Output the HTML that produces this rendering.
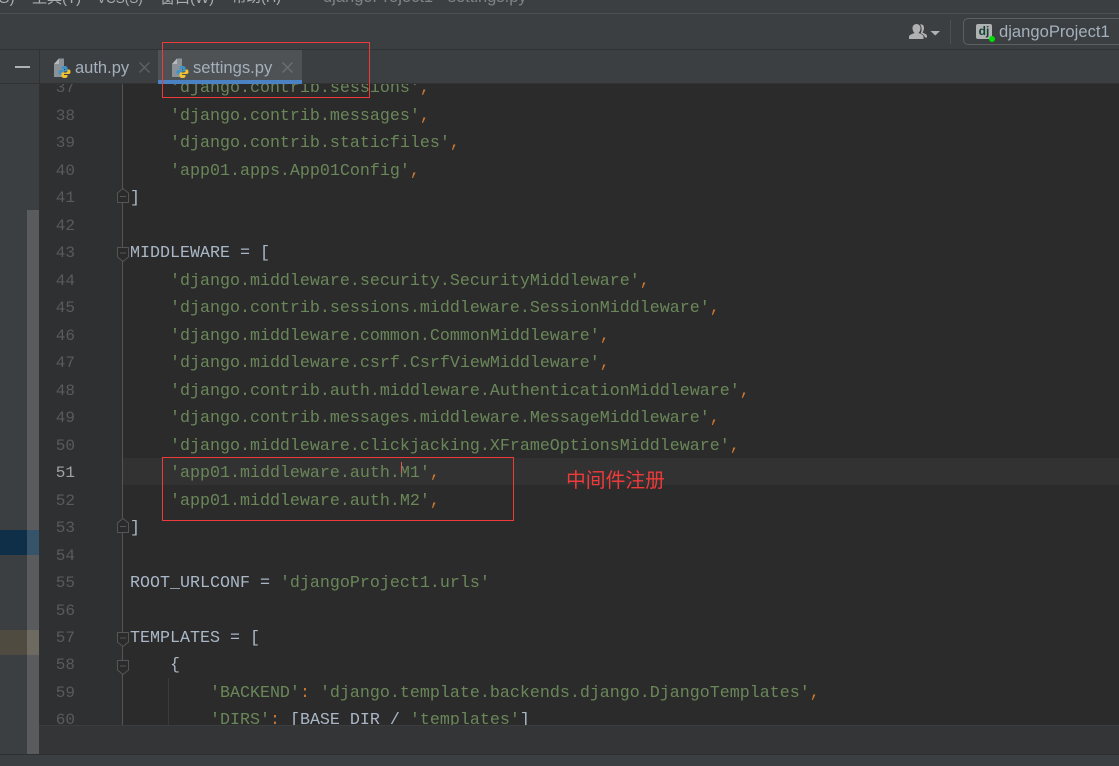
<!DOCTYPE html>
<html>
<head>
<meta charset="utf-8">
<style>
html,body{margin:0;padding:0;width:1119px;height:766px;overflow:hidden;background:#3c3f41}
*{box-sizing:border-box}
.a{position:absolute}
#root{position:relative;width:1119px;height:766px;overflow:hidden;font-family:"Liberation Sans","Noto Sans CJK SC",sans-serif}
.l{position:absolute;left:130px;margin-top:1px;height:28px;line-height:28px;font-family:"Liberation Mono",monospace;font-size:16.67px;color:#a9b7c6;white-space:pre}
.n{position:absolute;left:40px;width:35px;text-align:right;height:28px;line-height:28px;font-family:"Liberation Mono",monospace;font-size:16px;color:#585b5d}
.s{color:#6a8759}.c{color:#cc7832}
.fold{position:absolute;left:117px;width:12px;height:15px}
</style>
</head>
<body>
<div id="root">
<!-- top -->
<div class="a" style="left:0;top:0;width:1119px;height:13px;background:#3c3f41;overflow:hidden;color:#a9adb0;font-size:15px;line-height:15px;white-space:pre">
<span class="a" style="left:-7px;top:-9px">(G)</span>
<span class="a" style="left:32px;top:-9px">工具(T)</span>
<span class="a" style="left:97px;top:-9px;font-size:13.5px">VCS(S)</span>
<span class="a" style="left:160px;top:-9px">窗口(W)</span>
<span class="a" style="left:232px;top:-9px;font-size:14.5px">帮助(H)</span>
<span class="a" style="left:323px;top:-11px;font-size:16.5px;line-height:16px;color:#808486">djangoProject1 - settings.py</span>
</div>
<div class="a" style="left:0;top:13px;width:1119px;height:1px;background:#4d5052"></div>
<div class="a" style="left:0;top:49px;width:1119px;height:1px;background:#323232"></div>
<!-- user icon -->
<svg class="a" style="left:908px;top:23px" width="34" height="18" viewBox="0 0 34 18">
<path d="M1 16 V13.500 C1 12 4 11 6.500 10 C5 8.500 4.500 7 4.500 5 C4.500 2.500 6.500 1 8.500 1 C10.500 1 12.500 2.500 12.500 5 C12.500 7 12 8.500 10.500 10 C13 11 15.500 12 15.500 13.500 V16 Z" fill="#afb1b3"/>
<path d="M12 1.500 C14.500 .8 16 2.500 16 5 C16 7 15.300 8.500 14.500 9.500 C16 10.500 19 11 19 13 V14.500 H17 C16.500 12 14 11 12.500 10.200 C14 8.500 14.200 4 12 1.500 Z" fill="#afb1b3"/>
<path d="M22.500 8 L32 8 L27.250 12.500 Z" fill="#afb1b3"/>
</svg>
<div class="a" style="left:950px;top:20px;width:1px;height:24px;background:#4d5052"></div>
<div class="a" style="left:963px;top:18px;width:170px;height:27px;border:1px solid #5e6060;border-radius:5px;background:#3c3f41"></div>
<div class="a" style="left:976px;top:24px;width:16px;height:15px;background:#afb1b3;border-radius:2px;color:#14402f;font:bold 12px/14px 'Liberation Sans',sans-serif;text-align:center">dj</div>
<div class="a" style="left:989px;top:36px;width:6px;height:6px;background:#00e000;border-radius:50%"></div>
<div class="a" style="left:999px;top:22px;font-size:16.6px;line-height:20px;color:#a4b0bd;white-space:pre">djangoProject1</div>

<!-- tab bar -->
<div class="a" style="left:39px;top:50px;width:1px;height:33px;background:#323232"></div>
<div class="a" style="left:15px;top:66px;width:15px;height:2px;background:#afb1b3"></div>
<div class="a" style="left:158px;top:50px;width:144px;height:30px;background:#4e5254"></div>
<div class="a" style="left:158px;top:80px;width:144px;height:4px;background:#4a82c4"></div>
<div class="a" style="left:0;top:83px;width:158px;height:1px;background:#323232"></div>
<div class="a" style="left:302px;top:83px;width:817px;height:1px;background:#323232"></div>

<svg class="a" style="left:53px;top:57px" width="20" height="22" viewBox="0 0 20 22">
<path d="M1 7 L6 1.500 H11 V20 H1 Z" fill="#8a9297"/>
<path d="M1 7 L6 1.500 V7 Z" fill="#b4babd"/>
<g transform="translate(5.500,9)">
<path d="M6 0 C3.500 0 3 1 3 2 V3 H6.500 V4 H1.500 C.5 4 0 5 0 6 C0 7.500 .5 8.500 1.500 8.500 H3 V7 C3 6 4 5.500 5 5.500 H8 C8.500 5.500 9 5 9 4.500 V2 C9 1 8 0 6 0 Z" fill="#3d93c9"/>
<path transform="rotate(180 6 6)" d="M6 0 C3.500 0 3 1 3 2 V3 H6.500 V4 H1.500 C.5 4 0 5 0 6 C0 7.500 .5 8.500 1.500 8.500 H3 V7 C3 6 4 5.500 5 5.500 H8 C8.500 5.500 9 5 9 4.500 V2 C9 1 8 0 6 0 Z" fill="#f2c12e"/>
</g>
</svg>
<div class="a" style="left:75px;top:57px;font-size:16.5px;line-height:22px;color:#a4b0bd">auth.py</div>
<svg class="a" style="left:139px;top:62px" width="11" height="11" viewBox="0 0 11 11"><path d="M.5 .5 L10.500 10.500 M10.500 .5 L.5 10.500" stroke="#5e6264" stroke-width="1.300"/></svg>

<svg class="a" style="left:171px;top:57px" width="20" height="22" viewBox="0 0 20 22">
<path d="M1 7 L6 1.500 H11 V20 H1 Z" fill="#8a9297"/>
<path d="M1 7 L6 1.500 V7 Z" fill="#b4babd"/>
<g transform="translate(5.500,9)">
<path d="M6 0 C3.500 0 3 1 3 2 V3 H6.500 V4 H1.500 C.5 4 0 5 0 6 C0 7.500 .5 8.500 1.500 8.500 H3 V7 C3 6 4 5.500 5 5.500 H8 C8.500 5.500 9 5 9 4.500 V2 C9 1 8 0 6 0 Z" fill="#3d93c9"/>
<path transform="rotate(180 6 6)" d="M6 0 C3.500 0 3 1 3 2 V3 H6.500 V4 H1.500 C.5 4 0 5 0 6 C0 7.500 .5 8.500 1.500 8.500 H3 V7 C3 6 4 5.500 5 5.500 H8 C8.500 5.500 9 5 9 4.500 V2 C9 1 8 0 6 0 Z" fill="#f2c12e"/>
</g>
</svg>
<div class="a" style="left:193px;top:57px;font-size:16.6px;line-height:22px;color:#a4b0bd">settings.py</div>
<svg class="a" style="left:282px;top:62px" width="11" height="11" viewBox="0 0 11 11"><path d="M.5 .5 L10.500 10.500 M10.500 .5 L.5 10.500" stroke="#6b6f71" stroke-width="1.300"/></svg>

<!-- editor -->
<div class="a" style="left:39px;top:84px;width:83px;height:641px;background:#2f3031"></div>
<div class="a" style="left:122px;top:84px;width:997px;height:641px;background:#2b2b2b"></div>
<div class="a" style="left:122px;top:458px;width:997px;height:27px;background:#323232"></div>
<div class="a" style="left:122px;top:84px;width:1px;height:641px;background:#555"></div>
<div class="a" style="left:168px;top:678px;width:1px;height:47px;background:#3b3b3b"></div>

<!-- left strip -->
<div class="a" style="left:27px;top:210px;width:12px;height:544px;background:#5a5b5c"></div>
<div class="a" style="left:0;top:530px;width:27px;height:25px;background:#0e2f47"></div>
<div class="a" style="left:27px;top:530px;width:12px;height:25px;background:#35546a"></div>
<div class="a" style="left:0;top:630px;width:27px;height:25px;background:#4f4b41"></div>
<div class="a" style="left:27px;top:630px;width:12px;height:25px;background:#6d6a62"></div>

<div class="a" style="left:0;top:84px;width:1119px;height:641px;overflow:hidden">
<div class="a" style="left:0;top:-84px;width:1119px;height:766px">
<!-- numbers -->
<div class="n" style="top:74px">37</div>
<div class="n" style="top:102px">38</div>
<div class="n" style="top:129px">39</div>
<div class="n" style="top:157px">40</div>
<div class="n" style="top:184px">41</div>
<div class="n" style="top:212px">42</div>
<div class="n" style="top:239px">43</div>
<div class="n" style="top:267px">44</div>
<div class="n" style="top:294px">45</div>
<div class="n" style="top:322px">46</div>
<div class="n" style="top:349px">47</div>
<div class="n" style="top:377px">48</div>
<div class="n" style="top:404px">49</div>
<div class="n" style="top:432px">50</div>
<div class="n" style="top:459px;color:#a4a3a3">51</div>
<div class="n" style="top:487px">52</div>
<div class="n" style="top:514px">53</div>
<div class="n" style="top:542px">54</div>
<div class="n" style="top:569px">55</div>
<div class="n" style="top:597px">56</div>
<div class="n" style="top:624px">57</div>
<div class="n" style="top:651px">58</div>
<div class="n" style="top:679px">59</div>
<div class="n" style="top:706px">60</div>

<!-- code -->
<div class="l" style="top:74px">    <span class="s">'django.contrib.sessions'</span><span class="c">,</span></div>
<div class="l" style="top:102px">    <span class="s">'django.contrib.messages'</span><span class="c">,</span></div>
<div class="l" style="top:129px">    <span class="s">'django.contrib.staticfiles'</span><span class="c">,</span></div>
<div class="l" style="top:157px">    <span class="s">'app01.apps.App01Config'</span><span class="c">,</span></div>
<div class="l" style="top:184px">]</div>
<div class="l" style="top:239px">MIDDLEWARE = [</div>
<div class="l" style="top:267px">    <span class="s">'django.middleware.security.SecurityMiddleware'</span><span class="c">,</span></div>
<div class="l" style="top:294px">    <span class="s">'django.contrib.sessions.middleware.SessionMiddleware'</span><span class="c">,</span></div>
<div class="l" style="top:322px">    <span class="s">'django.middleware.common.CommonMiddleware'</span><span class="c">,</span></div>
<div class="l" style="top:349px">    <span class="s">'django.middleware.csrf.CsrfViewMiddleware'</span><span class="c">,</span></div>
<div class="l" style="top:377px">    <span class="s">'django.contrib.auth.middleware.AuthenticationMiddleware'</span><span class="c">,</span></div>
<div class="l" style="top:404px">    <span class="s">'django.contrib.messages.middleware.MessageMiddleware'</span><span class="c">,</span></div>
<div class="l" style="top:432px">    <span class="s">'django.middleware.clickjacking.XFrameOptionsMiddleware'</span><span class="c">,</span></div>
<div class="l" style="top:459px">    <span class="s">'app01.middleware.auth.M1'</span><span class="c">,</span></div>
<div class="l" style="top:487px">    <span class="s">'app01.middleware.auth.M2'</span><span class="c">,</span></div>
<div class="l" style="top:514px">]</div>
<div class="l" style="top:569px">ROOT_URLCONF = <span class="s">'djangoProject1.urls'</span></div>
<div class="l" style="top:624px">TEMPLATES = [</div>
<div class="l" style="top:651px">    {</div>
<div class="l" style="top:679px">        <span class="s">'BACKEND'</span><span class="c">:</span> <span class="s">'django.template.backends.django.DjangoTemplates'</span><span class="c">,</span></div>
<div class="l" style="top:706px">        <span class="s">'DIRS'</span><span class="c">:</span> [BASE_DIR / <span class="s">'templates'</span>]</div>
</div>
</div>
<div class="a" style="left:401px;top:462px;width:1px;height:11px;background:#d85a5a"></div>

<!-- fold marks -->
<svg class="fold" style="top:188px" viewBox="0 0 12 15"><path d="M.5 14.500 V5 L6 .5 L11.500 5 V14.500 Z M3 8.500 H9" fill="#2b2b2b" stroke="#555"/></svg>
<svg class="fold" style="top:247px" viewBox="0 0 12 15"><path d="M.5 .5 V10 L6 14.500 L11.500 10 V.5 Z M3 6 H9" fill="#2b2b2b" stroke="#555"/></svg>
<svg class="fold" style="top:518px" viewBox="0 0 12 15"><path d="M.5 14.500 V5 L6 .5 L11.500 5 V14.500 Z M3 8.500 H9" fill="#2b2b2b" stroke="#555"/></svg>
<svg class="fold" style="top:632px" viewBox="0 0 12 15"><path d="M.5 .5 V10 L6 14.500 L11.500 10 V.5 Z M3 6 H9" fill="#2b2b2b" stroke="#555"/></svg>
<svg class="fold" style="top:660px" viewBox="0 0 12 15"><path d="M.5 .5 V10 L6 14.500 L11.500 10 V.5 Z M3 6 H9" fill="#2b2b2b" stroke="#555"/></svg>

<!-- bottom -->
<div class="a" style="left:39px;top:725px;width:1080px;height:30px;background:#333537;border-top:1px solid #3a3c3e"></div>
<div class="a" style="left:0;top:754px;width:1119px;height:1px;background:#2e2f30"></div>
<div class="a" style="left:0;top:755px;width:1119px;height:11px;background:#3c3f41"></div>

<!-- annotations -->
<div class="a" style="left:162px;top:42px;width:208px;height:56px;border:1px solid #f03a3a"></div>
<div class="a" style="left:162px;top:457px;width:352px;height:64px;border:1px solid #f03a3a"></div>
<div class="a" style="left:566px;top:468px;font-size:19.8px;line-height:22px;color:#f03a3a;white-space:pre;font-family:'WenQuanYi Zen Hei','Noto Sans CJK SC',sans-serif">中间件注册</div>
</div>
</body>
</html>
